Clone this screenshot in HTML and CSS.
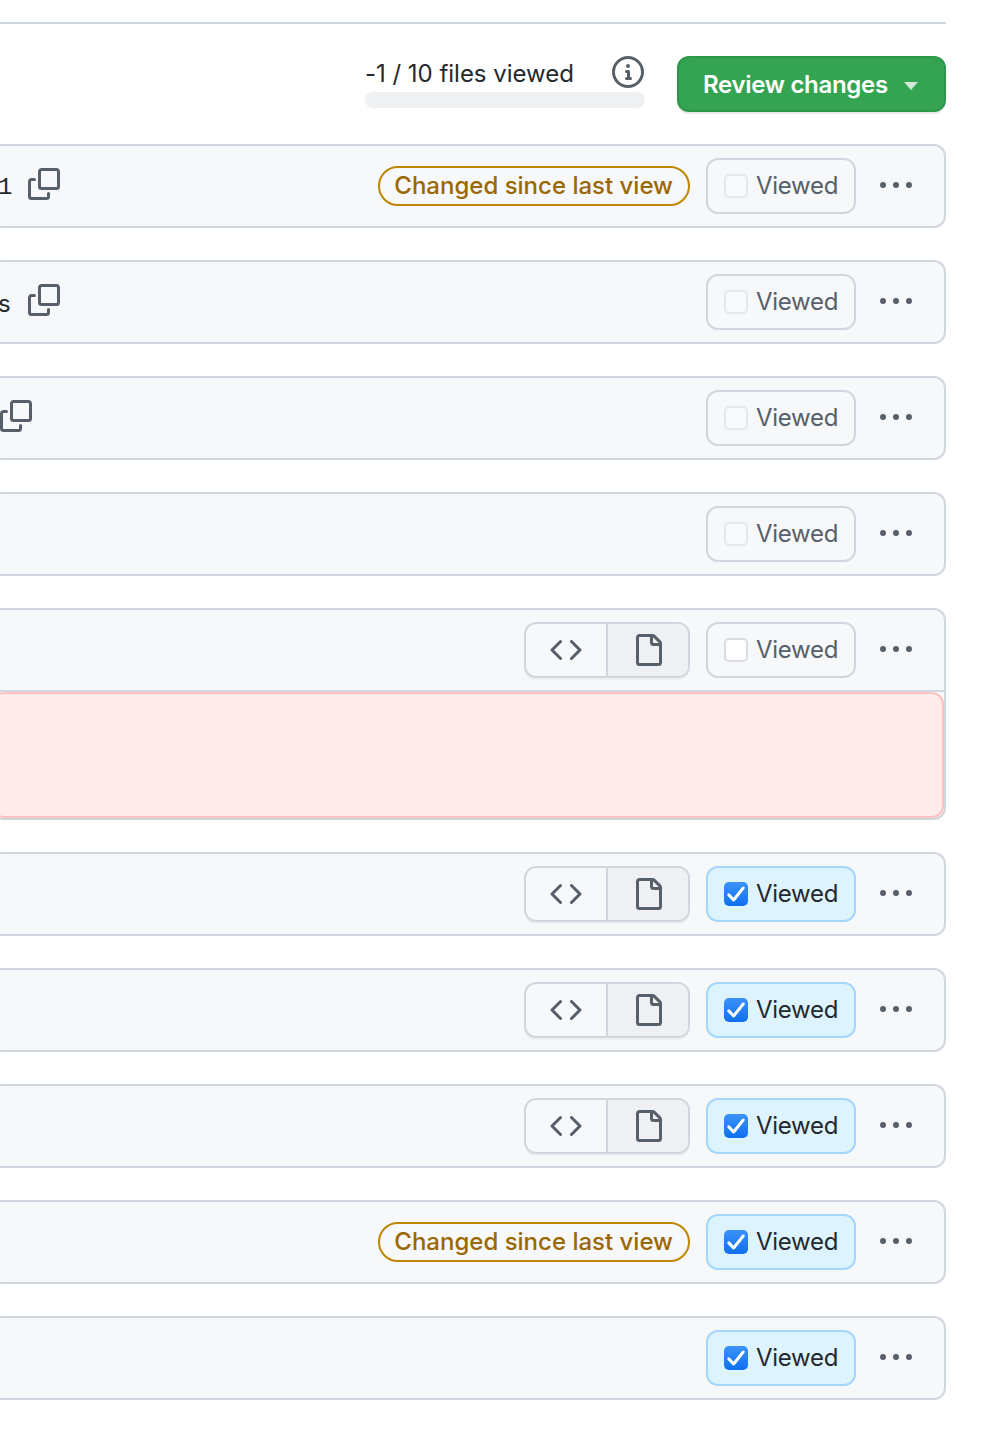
FILE: index.html
```html
<!DOCTYPE html>
<html>
	<head>
		<meta charset="utf-8" />
		<title>Files changed</title>
		<link rel="stylesheet" href="styles.css">
	</head>
	<body>
		<div class="page">
			<div class="toolbar">
				<div class="progress">
					<div class="progress-top">
						<span>-1 / 10 files viewed</span>
						<svg class="icon info" viewBox="0 0 16 16"><path d="M0 8a8 8 0 1 1 16 0A8 8 0 0 1 0 8Zm8-6.5a6.5 6.5 0 1 0 0 13 6.5 6.5 0 0 0 0-13ZM6.5 7.75A.75.75 0 0 1 7.25 7h1a.75.75 0 0 1 .75.75v2.75h.25a.75.75 0 0 1 0 1.5h-2a.75.75 0 0 1 0-1.5h.25v-2h-.25a.75.75 0 0 1-.75-.75ZM8 6a1 1 0 1 1 0-2 1 1 0 0 1 0 2Z"/></svg>
					</div>
					<div class="progress-bar"></div>
				</div>
				<button class="review" type="button"><span class="review-label">Review changes</span><span class="caret"></span></button>
			</div>

			<div class="file">
				<div class="file-head">
					<span class="name mono">1</span>
					<svg class="icon copy" viewBox="0 0 16 16"><path d="M0 6.75C0 5.784.784 5 1.75 5h1.5a.75.75 0 0 1 0 1.5h-1.5a.25.25 0 0 0-.25.25v7.5c0 .138.112.25.25.25h7.5a.25.25 0 0 0 .25-.25v-1.5a.75.75 0 0 1 1.5 0v1.5A1.75 1.75 0 0 1 9.25 16h-7.5A1.75 1.75 0 0 1 0 14.25Z"/><path d="M5 1.75C5 .784 5.784 0 6.75 0h7.5C15.216 0 16 .784 16 1.75v7.5A1.75 1.75 0 0 1 14.25 11h-7.5A1.75 1.75 0 0 1 5 9.25Zm1.75-.25a.25.25 0 0 0-.25.25v7.5c0 .138.112.25.25.25h7.5a.25.25 0 0 0 .25-.25v-7.5a.25.25 0 0 0-.25-.25Z"/></svg>
					<div class="actions">
						<span class="badge">Changed since last view</span>
						<label class="viewed"><span class="box"></span>Viewed</label>
						<svg class="icon kebab" viewBox="0 0 16 16"><path d="M8 9a1.5 1.5 0 1 0 0-3 1.5 1.5 0 0 0 0 3ZM1.5 9a1.5 1.5 0 1 0 0-3 1.5 1.5 0 0 0 0 3Zm13 0a1.5 1.5 0 1 0 0-3 1.5 1.5 0 0 0 0 3Z"/></svg>
					</div>
				</div>
			</div>

			<div class="file">
				<div class="file-head">
					<span class="name">s</span>
					<svg class="icon copy" viewBox="0 0 16 16"><path d="M0 6.75C0 5.784.784 5 1.75 5h1.5a.75.75 0 0 1 0 1.5h-1.5a.25.25 0 0 0-.25.25v7.5c0 .138.112.25.25.25h7.5a.25.25 0 0 0 .25-.25v-1.5a.75.75 0 0 1 1.5 0v1.5A1.75 1.75 0 0 1 9.25 16h-7.5A1.75 1.75 0 0 1 0 14.25Z"/><path d="M5 1.75C5 .784 5.784 0 6.75 0h7.5C15.216 0 16 .784 16 1.75v7.5A1.75 1.75 0 0 1 14.25 11h-7.5A1.75 1.75 0 0 1 5 9.25Zm1.75-.25a.25.25 0 0 0-.25.25v7.5c0 .138.112.25.25.25h7.5a.25.25 0 0 0 .25-.25v-7.5a.25.25 0 0 0-.25-.25Z"/></svg>
					<div class="actions">
						<label class="viewed"><span class="box"></span>Viewed</label>
						<svg class="icon kebab" viewBox="0 0 16 16"><path d="M8 9a1.5 1.5 0 1 0 0-3 1.5 1.5 0 0 0 0 3ZM1.5 9a1.5 1.5 0 1 0 0-3 1.5 1.5 0 0 0 0 3Zm13 0a1.5 1.5 0 1 0 0-3 1.5 1.5 0 0 0 0 3Z"/></svg>
					</div>
				</div>
			</div>

			<div class="file">
				<div class="file-head">
					<svg class="icon copy copy-first" viewBox="0 0 16 16"><path d="M0 6.75C0 5.784.784 5 1.75 5h1.5a.75.75 0 0 1 0 1.5h-1.5a.25.25 0 0 0-.25.25v7.5c0 .138.112.25.25.25h7.5a.25.25 0 0 0 .25-.25v-1.5a.75.75 0 0 1 1.5 0v1.5A1.75 1.75 0 0 1 9.25 16h-7.5A1.75 1.75 0 0 1 0 14.25Z"/><path d="M5 1.75C5 .784 5.784 0 6.75 0h7.5C15.216 0 16 .784 16 1.75v7.5A1.75 1.75 0 0 1 14.25 11h-7.5A1.75 1.75 0 0 1 5 9.25Zm1.75-.25a.25.25 0 0 0-.25.25v7.5c0 .138.112.25.25.25h7.5a.25.25 0 0 0 .25-.25v-7.5a.25.25 0 0 0-.25-.25Z"/></svg>
					<div class="actions">
						<label class="viewed"><span class="box"></span>Viewed</label>
						<svg class="icon kebab" viewBox="0 0 16 16"><path d="M8 9a1.5 1.5 0 1 0 0-3 1.5 1.5 0 0 0 0 3ZM1.5 9a1.5 1.5 0 1 0 0-3 1.5 1.5 0 0 0 0 3Zm13 0a1.5 1.5 0 1 0 0-3 1.5 1.5 0 0 0 0 3Z"/></svg>
					</div>
				</div>
			</div>

			<div class="file">
				<div class="file-head">
					<div class="actions">
						<label class="viewed"><span class="box"></span>Viewed</label>
						<svg class="icon kebab" viewBox="0 0 16 16"><path d="M8 9a1.5 1.5 0 1 0 0-3 1.5 1.5 0 0 0 0 3ZM1.5 9a1.5 1.5 0 1 0 0-3 1.5 1.5 0 0 0 0 3Zm13 0a1.5 1.5 0 1 0 0-3 1.5 1.5 0 0 0 0 3Z"/></svg>
					</div>
				</div>
			</div>

			<div class="file">
				<div class="file-head file-head-open">
					<div class="actions">
						<div class="switch">
							<span class="switch-btn"><svg class="icon" viewBox="0 0 16 16"><path d="m11.28 3.22 4.25 4.25a.75.75 0 0 1 0 1.06l-4.25 4.25a.749.749 0 0 1-1.275-.326.749.749 0 0 1 .215-.734L13.94 8l-3.72-3.72a.749.749 0 0 1 .326-1.275.749.749 0 0 1 .734.215Zm-6.56 0a.751.751 0 0 1 1.042.018.751.751 0 0 1 .018 1.042L2.06 8l3.72 3.72a.749.749 0 0 1-.326 1.275.749.749 0 0 1-.734-.215L.47 8.53a.75.75 0 0 1 0-1.06Z"/></svg></span>
							<span class="switch-btn selected"><svg class="icon" viewBox="0 0 16 16"><path d="M2 1.75C2 .784 2.784 0 3.75 0h6.586c.464 0 .909.184 1.237.513l2.914 2.914c.329.328.513.773.513 1.237v9.586A1.75 1.75 0 0 1 13.25 16h-9.5A1.75 1.75 0 0 1 2 14.25Zm1.75-.25a.25.25 0 0 0-.25.25v12.5c0 .138.112.25.25.25h9.5a.25.25 0 0 0 .25-.25V6h-2.75A1.75 1.75 0 0 1 9 4.25V1.5Zm6.75.062V4.25c0 .138.112.25.25.25h2.688l-.011-.013-2.914-2.914-.013-.011Z"/></svg></span>
						</div>
						<label class="viewed"><span class="box box-white"></span>Viewed</label>
						<svg class="icon kebab" viewBox="0 0 16 16"><path d="M8 9a1.5 1.5 0 1 0 0-3 1.5 1.5 0 0 0 0 3ZM1.5 9a1.5 1.5 0 1 0 0-3 1.5 1.5 0 0 0 0 3Zm13 0a1.5 1.5 0 1 0 0-3 1.5 1.5 0 0 0 0 3Z"/></svg>
					</div>
				</div>
				<div class="file-error"></div>
			</div>

			<div class="file">
				<div class="file-head">
					<div class="actions">
						<div class="switch">
							<span class="switch-btn"><svg class="icon" viewBox="0 0 16 16"><path d="m11.28 3.22 4.25 4.25a.75.75 0 0 1 0 1.06l-4.25 4.25a.749.749 0 0 1-1.275-.326.749.749 0 0 1 .215-.734L13.94 8l-3.72-3.72a.749.749 0 0 1 .326-1.275.749.749 0 0 1 .734.215Zm-6.56 0a.751.751 0 0 1 1.042.018.751.751 0 0 1 .018 1.042L2.06 8l3.72 3.72a.749.749 0 0 1-.326 1.275.749.749 0 0 1-.734-.215L.47 8.53a.75.75 0 0 1 0-1.06Z"/></svg></span>
							<span class="switch-btn selected"><svg class="icon" viewBox="0 0 16 16"><path d="M2 1.75C2 .784 2.784 0 3.75 0h6.586c.464 0 .909.184 1.237.513l2.914 2.914c.329.328.513.773.513 1.237v9.586A1.75 1.75 0 0 1 13.25 16h-9.5A1.75 1.75 0 0 1 2 14.25Zm1.75-.25a.25.25 0 0 0-.25.25v12.5c0 .138.112.25.25.25h9.5a.25.25 0 0 0 .25-.25V6h-2.75A1.75 1.75 0 0 1 9 4.25V1.5Zm6.75.062V4.25c0 .138.112.25.25.25h2.688l-.011-.013-2.914-2.914-.013-.011Z"/></svg></span>
						</div>
						<label class="viewed checked"><span class="box"><svg viewBox="0 0 16 16"><path d="M3.2 8.6 6.4 12 12.8 4"/></svg></span>Viewed</label>
						<svg class="icon kebab" viewBox="0 0 16 16"><path d="M8 9a1.5 1.5 0 1 0 0-3 1.5 1.5 0 0 0 0 3ZM1.5 9a1.5 1.5 0 1 0 0-3 1.5 1.5 0 0 0 0 3Zm13 0a1.5 1.5 0 1 0 0-3 1.5 1.5 0 0 0 0 3Z"/></svg>
					</div>
				</div>
			</div>

			<div class="file">
				<div class="file-head">
					<div class="actions">
						<div class="switch">
							<span class="switch-btn"><svg class="icon" viewBox="0 0 16 16"><path d="m11.28 3.22 4.25 4.25a.75.75 0 0 1 0 1.06l-4.25 4.25a.749.749 0 0 1-1.275-.326.749.749 0 0 1 .215-.734L13.94 8l-3.72-3.72a.749.749 0 0 1 .326-1.275.749.749 0 0 1 .734.215Zm-6.56 0a.751.751 0 0 1 1.042.018.751.751 0 0 1 .018 1.042L2.06 8l3.72 3.72a.749.749 0 0 1-.326 1.275.749.749 0 0 1-.734-.215L.47 8.53a.75.75 0 0 1 0-1.06Z"/></svg></span>
							<span class="switch-btn selected"><svg class="icon" viewBox="0 0 16 16"><path d="M2 1.75C2 .784 2.784 0 3.75 0h6.586c.464 0 .909.184 1.237.513l2.914 2.914c.329.328.513.773.513 1.237v9.586A1.75 1.75 0 0 1 13.25 16h-9.5A1.75 1.75 0 0 1 2 14.25Zm1.75-.25a.25.25 0 0 0-.25.25v12.5c0 .138.112.25.25.25h9.5a.25.25 0 0 0 .25-.25V6h-2.75A1.75 1.75 0 0 1 9 4.25V1.5Zm6.75.062V4.25c0 .138.112.25.25.25h2.688l-.011-.013-2.914-2.914-.013-.011Z"/></svg></span>
						</div>
						<label class="viewed checked"><span class="box"><svg viewBox="0 0 16 16"><path d="M3.2 8.6 6.4 12 12.8 4"/></svg></span>Viewed</label>
						<svg class="icon kebab" viewBox="0 0 16 16"><path d="M8 9a1.5 1.5 0 1 0 0-3 1.5 1.5 0 0 0 0 3ZM1.5 9a1.5 1.5 0 1 0 0-3 1.5 1.5 0 0 0 0 3Zm13 0a1.5 1.5 0 1 0 0-3 1.5 1.5 0 0 0 0 3Z"/></svg>
					</div>
				</div>
			</div>

			<div class="file">
				<div class="file-head">
					<div class="actions">
						<div class="switch">
							<span class="switch-btn"><svg class="icon" viewBox="0 0 16 16"><path d="m11.28 3.22 4.25 4.25a.75.75 0 0 1 0 1.06l-4.25 4.25a.749.749 0 0 1-1.275-.326.749.749 0 0 1 .215-.734L13.94 8l-3.72-3.72a.749.749 0 0 1 .326-1.275.749.749 0 0 1 .734.215Zm-6.56 0a.751.751 0 0 1 1.042.018.751.751 0 0 1 .018 1.042L2.06 8l3.72 3.72a.749.749 0 0 1-.326 1.275.749.749 0 0 1-.734-.215L.47 8.53a.75.75 0 0 1 0-1.06Z"/></svg></span>
							<span class="switch-btn selected"><svg class="icon" viewBox="0 0 16 16"><path d="M2 1.75C2 .784 2.784 0 3.75 0h6.586c.464 0 .909.184 1.237.513l2.914 2.914c.329.328.513.773.513 1.237v9.586A1.75 1.75 0 0 1 13.25 16h-9.5A1.75 1.75 0 0 1 2 14.25Zm1.75-.25a.25.25 0 0 0-.25.25v12.5c0 .138.112.25.25.25h9.5a.25.25 0 0 0 .25-.25V6h-2.75A1.75 1.75 0 0 1 9 4.25V1.5Zm6.75.062V4.25c0 .138.112.25.25.25h2.688l-.011-.013-2.914-2.914-.013-.011Z"/></svg></span>
						</div>
						<label class="viewed checked"><span class="box"><svg viewBox="0 0 16 16"><path d="M3.2 8.6 6.4 12 12.8 4"/></svg></span>Viewed</label>
						<svg class="icon kebab" viewBox="0 0 16 16"><path d="M8 9a1.5 1.5 0 1 0 0-3 1.5 1.5 0 0 0 0 3ZM1.5 9a1.5 1.5 0 1 0 0-3 1.5 1.5 0 0 0 0 3Zm13 0a1.5 1.5 0 1 0 0-3 1.5 1.5 0 0 0 0 3Z"/></svg>
					</div>
				</div>
			</div>

			<div class="file">
				<div class="file-head">
					<div class="actions">
						<span class="badge">Changed since last view</span>
						<label class="viewed checked"><span class="box"><svg viewBox="0 0 16 16"><path d="M3.2 8.6 6.4 12 12.8 4"/></svg></span>Viewed</label>
						<svg class="icon kebab" viewBox="0 0 16 16"><path d="M8 9a1.5 1.5 0 1 0 0-3 1.5 1.5 0 0 0 0 3ZM1.5 9a1.5 1.5 0 1 0 0-3 1.5 1.5 0 0 0 0 3Zm13 0a1.5 1.5 0 1 0 0-3 1.5 1.5 0 0 0 0 3Z"/></svg>
					</div>
				</div>
			</div>

			<div class="file">
				<div class="file-head">
					<div class="actions">
						<label class="viewed checked"><span class="box"><svg viewBox="0 0 16 16"><path d="M3.2 8.6 6.4 12 12.8 4"/></svg></span>Viewed</label>
						<svg class="icon kebab" viewBox="0 0 16 16"><path d="M8 9a1.5 1.5 0 1 0 0-3 1.5 1.5 0 0 0 0 3ZM1.5 9a1.5 1.5 0 1 0 0-3 1.5 1.5 0 0 0 0 3Zm13 0a1.5 1.5 0 1 0 0-3 1.5 1.5 0 0 0 0 3Z"/></svg>
					</div>
				</div>
			</div>
		</div>
	</body>
</html>
```

FILE: styles.css
```css
html, body { margin: 0; overflow: hidden; background-color: #ffffff; }
body { font-family: Inter, "Liberation Sans", sans-serif; font-size: 24px; color: #24292f; }

.page { width: 946px; margin-top: 22px; border-top: 2px solid #d0d7de; }
.icon { display: block; width: 32px; height: 32px; fill: #57606a; flex: none; }

.toolbar { display: flex; justify-content: flex-end; align-items: flex-start; padding-top: 32px; margin-bottom: 32px; }
.progress { width: 280px; margin-right: 32px; }
.progress-top { display: flex; justify-content: space-between; align-items: center; height: 36px; }
.progress-top span { line-height: 36px; letter-spacing: -0.02px; }
.info { margin-top: -4px; margin-right: 1px; }
.progress-bar { height: 16px; border-radius: 8px; background-color: #eff1f3; }

.review { display: flex; align-items: center; box-sizing: border-box; width: 269px; height: 56px; padding: 0 0 0 24px; border: 2px solid #2c974b; border-radius: 12px; background-color: #34a452; box-shadow: 0 2px 0 rgba(27, 31, 36, 0.1); color: #ffffff; font-family: inherit; font-size: 24px; font-weight: 600; }
.review-label { white-space: nowrap; letter-spacing: -0.3px; }
.caret { margin-left: 16px; margin-top: 4px; border-top: 8px solid #cfe9d6; border-left: 7px solid transparent; border-right: 7px solid transparent; }

.file { margin: 0 0 32px -10px; border: 2px solid #d0d7de; border-radius: 12px; background-color: #f6f8fa; }
.file-head { display: flex; align-items: center; height: 80px; padding: 0 32px 0 6px; }
.file-head-open { border-bottom: 2px solid #d0d7de; }
.file-error { height: 126px; border: 2px solid #ffc1c0; border-radius: 12px; background-color: #ffebe9; box-sizing: border-box; }

.name { width: 13px; line-height: 32px; margin-top: 4px; }
.mono { font-family: "Liberation Mono", monospace; }
.copy { margin-left: 17px; margin-top: -4px; }
.copy-first { margin-left: 2px; }

.actions { display: flex; align-items: center; margin-left: auto; }
.badge { height: 40px; box-sizing: border-box; padding: 0 15px 0 14px; margin-right: 16px; border: 2px solid #bf8700; border-radius: 20px; color: #9a6700; font-weight: 500; line-height: 36px; }

.viewed { display: flex; align-items: center; box-sizing: border-box; width: 150px; height: 56px; padding-left: 16px; border: 2px solid #d0d7de; border-radius: 12px; color: #57606a; line-height: 32px; letter-spacing: -0.3px; }
.viewed.checked { background-color: #ddf4ff; border-color: #a5d6ff; color: #24292f; }
.box { display: block; box-sizing: border-box; width: 24px; height: 24px; margin-right: 8px; border: 2px solid #e4e7eb; border-radius: 5px; background-color: #f8f9fb; }
.box-white { background-color: #ffffff; border-color: #d8dbe0; }
.checked .box { border: none; background: linear-gradient(#3b92f8, #0f6ff0); }
.box svg { display: block; width: 24px; height: 24px; fill: none; stroke: #ffffff; stroke-width: 2; stroke-linecap: round; stroke-linejoin: round; }
.kebab { margin-left: 24px; }

.switch { display: flex; height: 56px; margin-right: 16px; box-sizing: border-box; width: 166px; border: 2px solid #d0d7de; border-radius: 12px; overflow: hidden; box-shadow: 0 2px 0 rgba(27, 31, 36, 0.04); }
.switch-btn { display: flex; align-items: center; justify-content: center; width: 81px; }
.switch-btn.selected { width: 83px; border-left: 2px solid #d0d7de; background-color: #eef0f3; box-sizing: border-box; }
```
